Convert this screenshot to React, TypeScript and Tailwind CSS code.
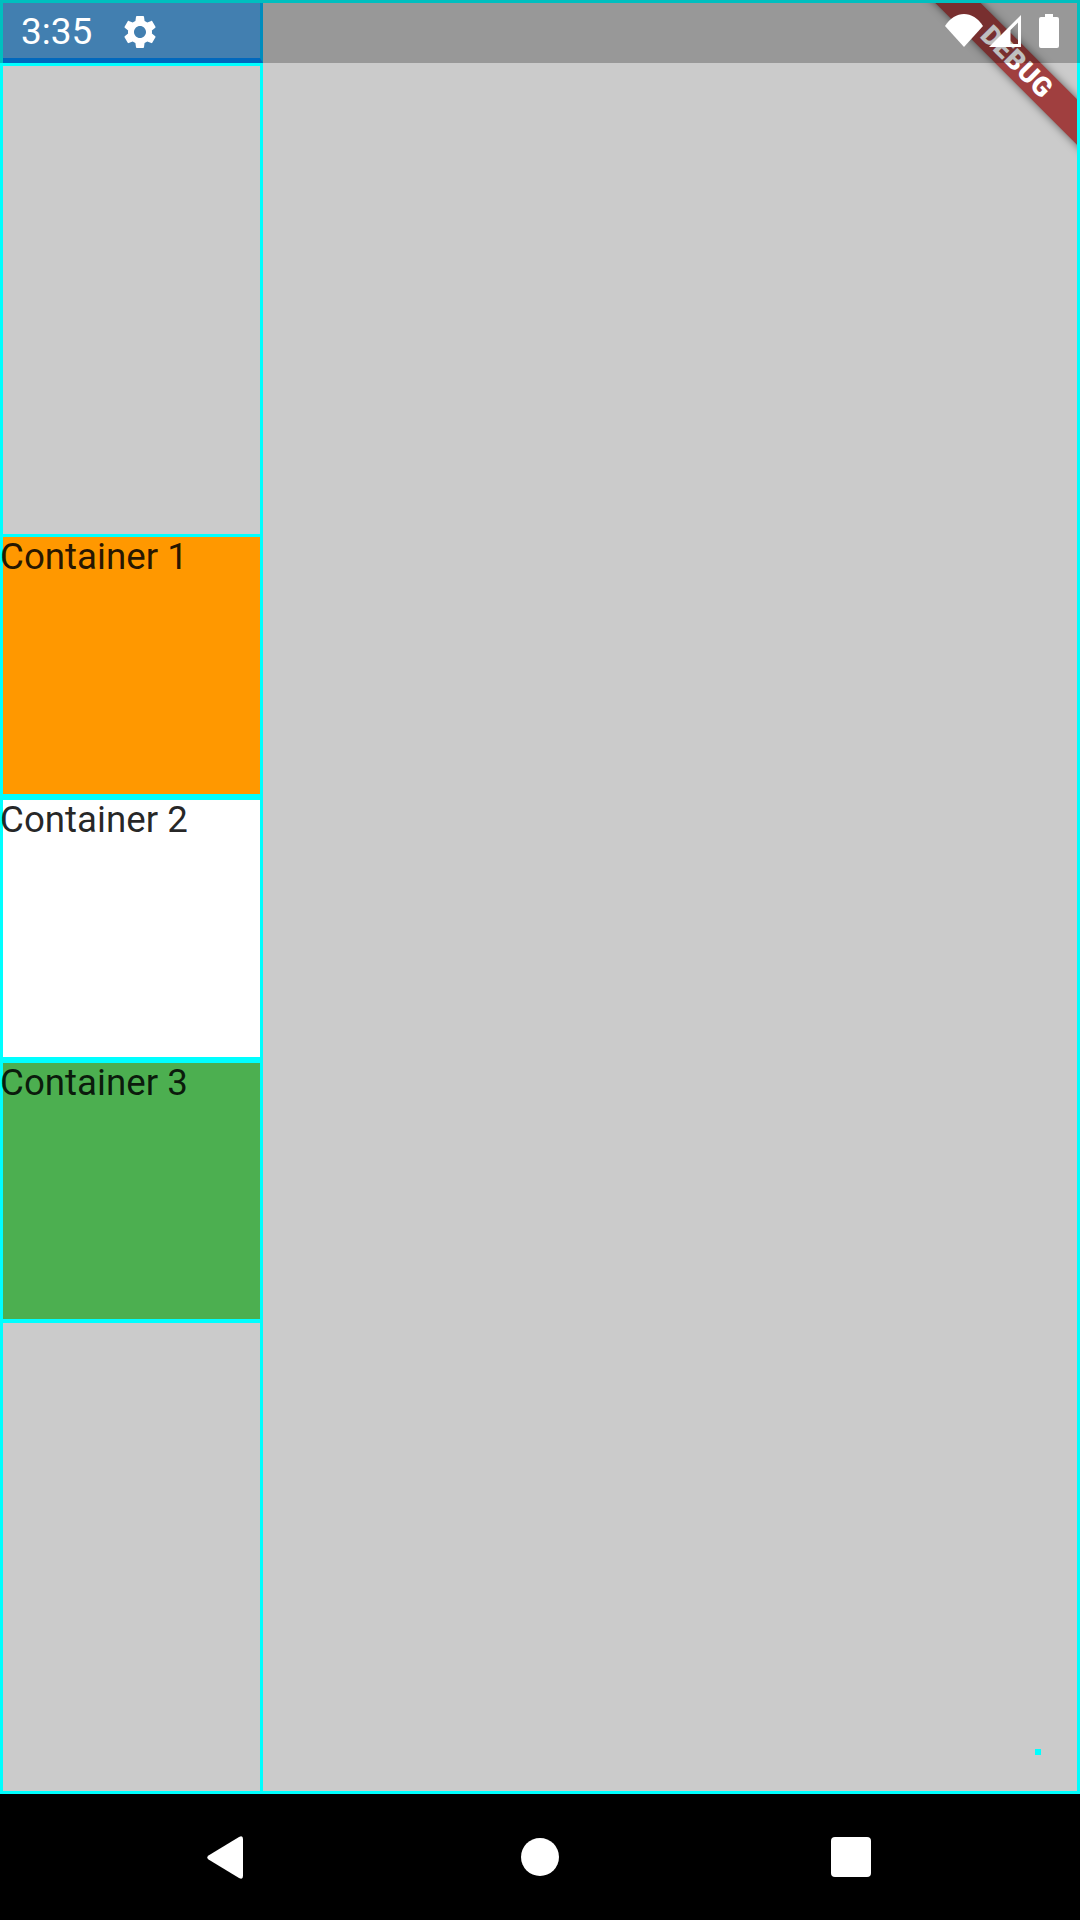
import React from 'react'

const SETTINGS_PATH =
    'M19.14 12.94c.04-.3.06-.61.06-.94 0-.32-.02-.64-.07-.94l2.03-1.58c.18-.14.23-.41.12-.61l-1.92-3.32c-.12-.22-.37-.29-.59-.22l-2.39.96c-.5-.38-1.03-.7-1.62-.94l-.36-2.54c-.04-.24-.24-.41-.48-.41h-3.84c-.24 0-.43.17-.47.41l-.36 2.54c-.59.24-1.13.57-1.62.94l-2.39-.96c-.22-.08-.47 0-.59.22L2.74 8.87c-.12.21-.08.47.12.61l2.03 1.58c-.05.3-.09.63-.09.94s.02.64.07.94l-2.03 1.58c-.18.14-.23.41-.12.61l1.92 3.32c.12.22.37.29.59.22l2.39-.96c.5.38 1.03.7 1.62.94l.36 2.54c.05.24.24.41.48.41h3.84c.24 0 .44-.17.47-.41l.36-2.54c.59-.24 1.13-.56 1.62-.94l2.39.96c.22.08.47 0 .59-.22l1.92-3.32c.12-.22.07-.47-.12-.61l-2.01-1.58zM12 15.6c-1.98 0-3.6-1.62-3.6-3.6s1.62-3.6 3.6-3.6 3.6 1.62 3.6 3.6-1.62 3.6-3.6 3.6z'

function StatusBar() {
    return (
        <div className="absolute inset-x-0 top-0 flex h-[63px] items-start justify-between bg-black/25 text-white">
            <div className="flex items-center pl-[21px] pt-[11px]">
                <span className="text-[37px] leading-[42px]">3:35</span>
                <svg width="40" height="40" viewBox="0 0 24 24" fill="white" className="ml-[28px]">
                    <path d={SETTINGS_PATH} />
                </svg>
            </div>
            <div className="flex items-start pr-[21px] pt-[14px]">
                <svg width="38" height="34" viewBox="0 0 38 34" fill="white">
                    <path d="M0 12 C10 -4 28 -4 38 12 L19 33 Z" />
                </svg>
                <svg width="33" height="34" viewBox="0 0 33 34" fill="white" className="ml-[5px]">
                    <path fillRule="evenodd" d="M33 1V33H1ZM30 8.5V30H22.5V16Z" />
                </svg>
                <svg width="20" height="34" viewBox="0 0 20 34" fill="white" className="ml-[18px]">
                    <path d="M6 0H14V3H18Q20 3 20 5V32Q20 34 18 34H2Q0 34 0 32V5Q0 3 2 3H6Z" />
                </svg>
            </div>
        </div>
    )
}

function DebugBanner() {
    return (
        <div className="absolute left-[602px] top-[41px] flex h-[32px] w-[300px] rotate-45 items-center justify-center bg-[#a03f3f] pl-[5px] font-['Roboto',sans-serif] text-[27px] font-black tracking-[0.5px] text-white shadow-[0_0_9px_rgba(0,0,0,0.55)]">
            DEBUG
        </div>
    )
}

function Box({ label, color, height }: { label: string; color: string; height: string }) {
    return (
        <div className={`${color} ${height} text-[36.7px] leading-[40px] text-black/85`}>
            <span className="-ml-[3px] block whitespace-nowrap">{label}</span>
        </div>
    )
}

export default function App() {
    return (
        <div className="relative flex h-[1920px] w-[1080px] flex-col overflow-hidden bg-black font-['Roboto',sans-serif]">
            <div className="flex h-[1794px] border-[3px] border-[#00ffff]">
                {/* Left column */}
                <div className="flex w-[260px] shrink-0 flex-col">
                    <div className="h-[60px] border-b-[5px] border-r-[3px] border-b-[#008bfd] border-r-[#00bbfd] bg-[#59aaeb]" />
                    <div className="flex flex-1 flex-col border-r-[3px] border-[#00ffff] bg-[#00ffff]">
                        <div className="mt-[3px] h-[468px] bg-[#cbcbcb]" />
                        <div className="mt-[3px]">
                            <Box label="Container 1" color="bg-[#ff9800]" height="h-[257px]" />
                        </div>
                        <div className="mt-[6px]">
                            <Box label="Container 2" color="bg-white" height="h-[257px]" />
                        </div>
                        <div className="mt-[6px]">
                            <Box label="Container 3" color="bg-[#4caf50]" height="h-[256px]" />
                        </div>
                        <div className="mt-[4px] flex-1 bg-[#cbcbcb]" />
                    </div>
                </div>

                {/* Main area */}
                <div className="relative flex flex-1 items-end justify-end overflow-hidden bg-[#cbcbcb] p-[36px]">
                    <div className="h-[6px] w-[6px] bg-[#00ffff]" />
                    <DebugBanner />
                </div>
            </div>

            {/* Navigation bar */}
            <div className="flex flex-1 items-center pl-[207px]">
                <svg width="37" height="43" viewBox="0 0 37 43" fill="white">
                    <path d="M1.5 19.5 32 1Q36 -1 36 3V40Q36 44 32 42L1.5 23.5Q-1 21.5 1.5 19.5Z" />
                </svg>
                <div className="ml-[277px] h-[38px] w-[38px] rounded-full bg-white" />
                <div className="ml-[272px] h-[40px] w-[40px] rounded-[4px] bg-white" />
            </div>

            <StatusBar />
        </div>
    )
}
